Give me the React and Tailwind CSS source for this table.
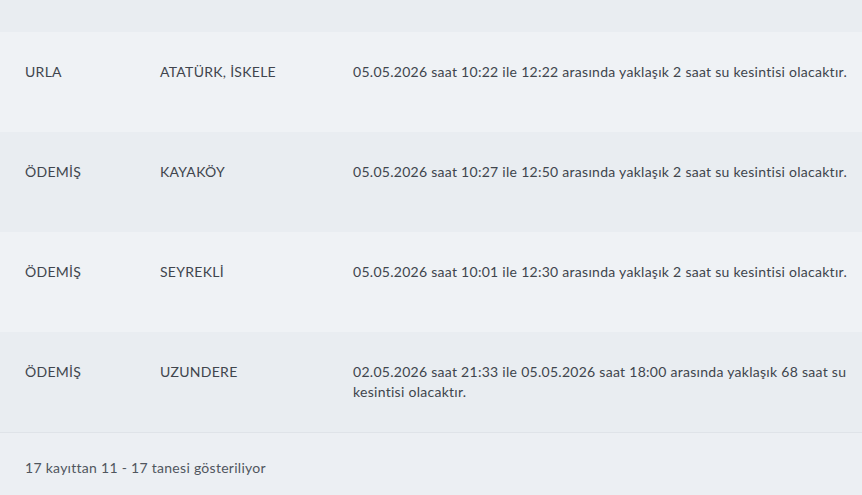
import React from "react";

const rows = [
  { ilce: "URLA", mah: "ATATÜRK, İSKELE", msg: "05.05.2026 saat 10:22 ile 12:22 arasında yaklaşık 2 saat su kesintisi olacaktır.", bg: "bg-[#eff2f5]" },
  { ilce: "ÖDEMİŞ", mah: "KAYAKÖY", msg: "05.05.2026 saat 10:27 ile 12:50 arasında yaklaşık 2 saat su kesintisi olacaktır.", bg: "bg-[#e9edf1]" },
  { ilce: "ÖDEMİŞ", mah: "SEYREKLİ", msg: "05.05.2026 saat 10:01 ile 12:30 arasında yaklaşık 2 saat su kesintisi olacaktır.", bg: "bg-[#eff2f5]" },
  { ilce: "ÖDEMİŞ", mah: "UZUNDERE", msg: "02.05.2026 saat 21:33 ile 05.05.2026 saat 18:00 arasında yaklaşık 68 saat su kesintisi olacaktır.", bg: "bg-[#e9edf1]" },
];

export default function App() {
  return (
    <div className="w-[862px] h-[495px] overflow-hidden bg-[#eceff3] text-[14px] leading-[20px] tracking-[0.28px] text-[#40454d]" style={{ fontFamily: "Lato, 'Noto Sans', sans-serif" }}>
      <div className="h-[32px] bg-[#e9edf1]" />
      {rows.map((r, i) => (
        <div key={i} className={`flex h-[100px] pt-[30px] ${r.bg}`}>
          <div className="w-[160px] pl-[25px] shrink-0">{r.ilce}</div>
          <div className="w-[193px] shrink-0">{r.mah}</div>
          <div className="w-[500px] shrink-0">{r.msg}</div>
        </div>
      ))}
      <div className="border-t border-[#dfe3e8] pl-[25px] pt-[25px] text-[#50565e]">
        17 kayıttan 11 - 17 tanesi gösteriliyor
      </div>
    </div>
  );
}
